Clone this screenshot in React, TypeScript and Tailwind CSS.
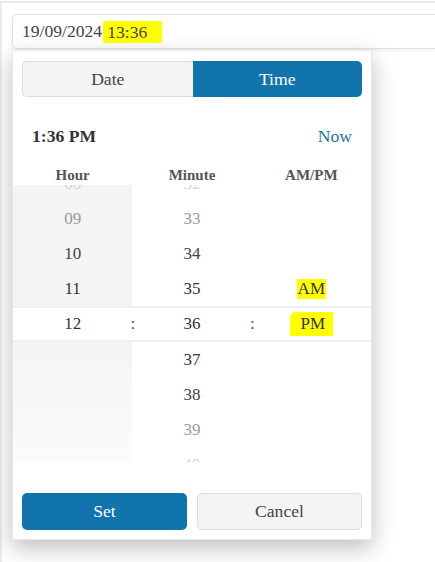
const hoursAbove = [
    { v: '08', c: 'text-[#d4d4d4]' },
    { v: '09', c: 'text-[#999]' },
    { v: '10', c: 'text-[#444]' },
    { v: '11', c: 'text-[#333]' },
]
const minutesAbove = [
    { v: '32', c: 'text-[#d4d4d4]' },
    { v: '33', c: 'text-[#999]' },
    { v: '34', c: 'text-[#444]' },
    { v: '35', c: 'text-[#333]' },
]
const minutesBelow = [
    { v: '37', c: 'text-[#333]' },
    { v: '38', c: 'text-[#444]' },
    { v: '39', c: 'text-[#999]' },
    { v: '40', c: 'text-[#d4d4d4]' },
]

function Cell({ children, className = '' }: { children?: React.ReactNode; className?: string }) {
    return <div className={`h-[35px] shrink-0 flex items-center justify-center text-[17px] ${className}`}>{children}</div>
}

export default function App() {
    return (
        <div className="h-[562px] overflow-hidden bg-white font-['Liberation_Serif','Times_New_Roman',serif]">
            <div className="mt-px h-full border-t-2 border-l-2 border-[#e6ecef]">
                {/* input */}
                <div className="ml-[10px] mt-[11px] h-[35px] rounded-l-[5px] border border-r-0 border-[#e2e2e2] bg-white shadow-[0_2px_4px_rgba(0,0,0,0.06)] flex items-center pl-[9px] text-[17.6px] text-[#444]">
                    <span>19/09/2024</span>
                    <span className="ml-[1px] bg-[#ffff00] pl-[4px] pr-[15px] py-[1px] leading-[20px]">13:36</span>
                </div>

                {/* picker */}
                <div className="ml-[10px] mt-px w-[360px] h-[490px] border border-[#e8e8e8] bg-white shadow-[0_8px_22px_rgba(0,0,0,0.26)] flex flex-col">
                    <div className="mx-[9px] mt-[10px] flex h-[36px] text-[17.6px]">
                        <div className="flex-1 flex items-center justify-center rounded-l-[5px] border border-r-0 border-[#dcdcdc] bg-[#f4f4f4] text-[#444]">Date</div>
                        <div className="flex-1 flex items-center justify-center rounded-r-[5px] bg-[#1274ad] text-white">Time</div>
                    </div>

                    <div className="flex items-center justify-between px-[19px] mt-[27px] h-[24px]">
                        <span className="text-[17.6px] font-bold text-[#333]">1:36 PM</span>
                        <span className="text-[17.6px] text-[#1a74ad]">Now</span>
                    </div>

                    <div className="mt-[16px] grid grid-cols-3 h-[20px] items-center text-[15px] font-bold text-[#555]">
                        <div className="text-center">Hour</div>
                        <div className="text-center">Minute</div>
                        <div className="text-center">AM/PM</div>
                    </div>

                    {/* wheel */}
                    <div className="mt-px flex flex-col">
                        <div className="flex h-[121px] overflow-hidden">
                            <div className="w-1/3 flex flex-col justify-end bg-[#f4f4f4]">
                                {hoursAbove.map(h => (
                                    <Cell key={h.v} className={h.c}>{h.v}</Cell>
                                ))}
                            </div>
                            <div className="w-1/3 flex flex-col justify-end">
                                {minutesAbove.map(m => (
                                    <Cell key={m.v} className={m.c}>{m.v}</Cell>
                                ))}
                            </div>
                            <div className="w-1/3 flex flex-col justify-end">
                                <Cell className="text-[#333]">
                                    <span className="bg-[#ffff00] px-px leading-[20px]">AM</span>
                                </Cell>
                            </div>
                        </div>

                        <div className="h-[36px] border-y-2 border-[#f0f0f0] bg-white grid grid-cols-3 text-[17px] text-[#333]">
                            <div className="relative flex items-center justify-center">
                                12
                                <span className="absolute right-[-3px] text-[#555]">:</span>
                            </div>
                            <div className="relative flex items-center justify-center">
                                36
                                <span className="absolute right-[-3px] text-[#555]">:</span>
                            </div>
                            <div className="flex items-center justify-center">
                                <span className="bg-[#ffff00] pl-[11px] pr-[8px] leading-[24px] rounded-tl-[6px]">PM</span>
                            </div>
                        </div>

                        <div className="flex h-[120px] overflow-hidden">
                            <div className="w-1/3 bg-gradient-to-b from-[#f4f4f4] to-[#fbfbfb]" />
                            <div className="w-1/3 flex flex-col">
                                {minutesBelow.map(m => (
                                    <Cell key={m.v} className={m.c}>{m.v}</Cell>
                                ))}
                            </div>
                            <div className="w-1/3" />
                        </div>
                    </div>

                    <div className="mt-auto mb-[9px] mx-[9px] grid grid-cols-2 gap-[10px] text-[17.6px]">
                        <button type="button" className="h-[37px] rounded-[5px] bg-[#1274ad] text-white">Set</button>
                        <button type="button" className="h-[37px] rounded-[5px] border border-[#dcdcdc] bg-[#f4f4f4] text-[#444]">Cancel</button>
                    </div>
                </div>
            </div>
        </div>
    )
}
